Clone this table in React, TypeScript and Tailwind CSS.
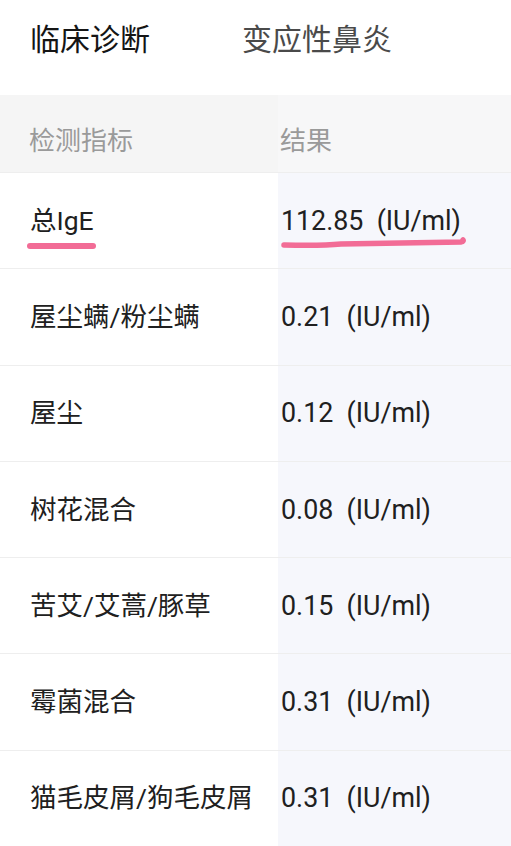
import React from "react";

const rows: { name: string; value: string; mark?: boolean }[] = [
  { name: "总IgE", value: "112.85\u00a0\u00a0(IU/ml)", mark: true },
  { name: "屋尘螨/粉尘螨", value: "0.21\u00a0\u00a0(IU/ml)" },
  { name: "屋尘", value: "0.12\u00a0\u00a0(IU/ml)" },
  { name: "树花混合", value: "0.08\u00a0\u00a0(IU/ml)" },
  { name: "苦艾/艾蒿/豚草", value: "0.15\u00a0\u00a0(IU/ml)" },
  { name: "霉菌混合", value: "0.31\u00a0\u00a0(IU/ml)" },
  { name: "猫毛皮屑/狗毛皮屑", value: "0.31\u00a0\u00a0(IU/ml)" },
];

export default function App() {
  return (
    <div
      className="w-[511px] h-[846px] overflow-hidden bg-white"
      style={{ fontFamily: 'Roboto, "Noto Sans CJK SC", sans-serif' }}
    >
      <div className="h-[95px] flex items-start pt-[20px]">
        <div className="w-[242px] pl-[30px] text-[30px] leading-[40px] text-[#151515]">临床诊断</div>
        <div className="text-[30px] leading-[40px] text-[#4a4a4a]">变应性鼻炎</div>
      </div>
      <div className="h-[77px] flex bg-[#f5f5f5]">
        <div className="w-[278px] pl-[29px] pt-[28px] text-[26px] leading-[36px] text-[#9a9a9a]">检测指标</div>
        <div className="flex-1 pl-[2px] pt-[28px] text-[26px] leading-[36px] text-[#9a9a9a] bg-[#f7f7f8]">结果</div>
      </div>
      {rows.map((r, i) => (
        <div key={i} className="h-[96.3px] flex border-t border-[#eeeeee]">
          <div className="w-[278px] pl-[30px] flex items-center bg-white">
            <div className="relative text-[26.5px] leading-[36px] text-[#202020] whitespace-nowrap">
              {r.name}
              {r.mark && (
                <div className="absolute left-[-3px] right-[-2px] top-[40px] h-[6px] rounded-full bg-[#f26c96]" />
              )}
            </div>
          </div>
          <div className="flex-1 pl-[3px] flex items-center bg-[#f6f7fc]">
            <div className="relative text-[26.8px] leading-[36px] text-[#202020] whitespace-nowrap">
              {r.value}
              {r.mark && (
                <svg className="absolute left-0 top-[33px]" width="186" height="14" viewBox="0 0 186 14">
                  <path d="M3 9 Q40 10 60 8 Q120 7 180 6 Q183 5 182 4" stroke="#f26c96" strokeWidth="5.5" fill="none" strokeLinecap="round" />
                </svg>
              )}
            </div>
          </div>
        </div>
      ))}
    </div>
  );
}
